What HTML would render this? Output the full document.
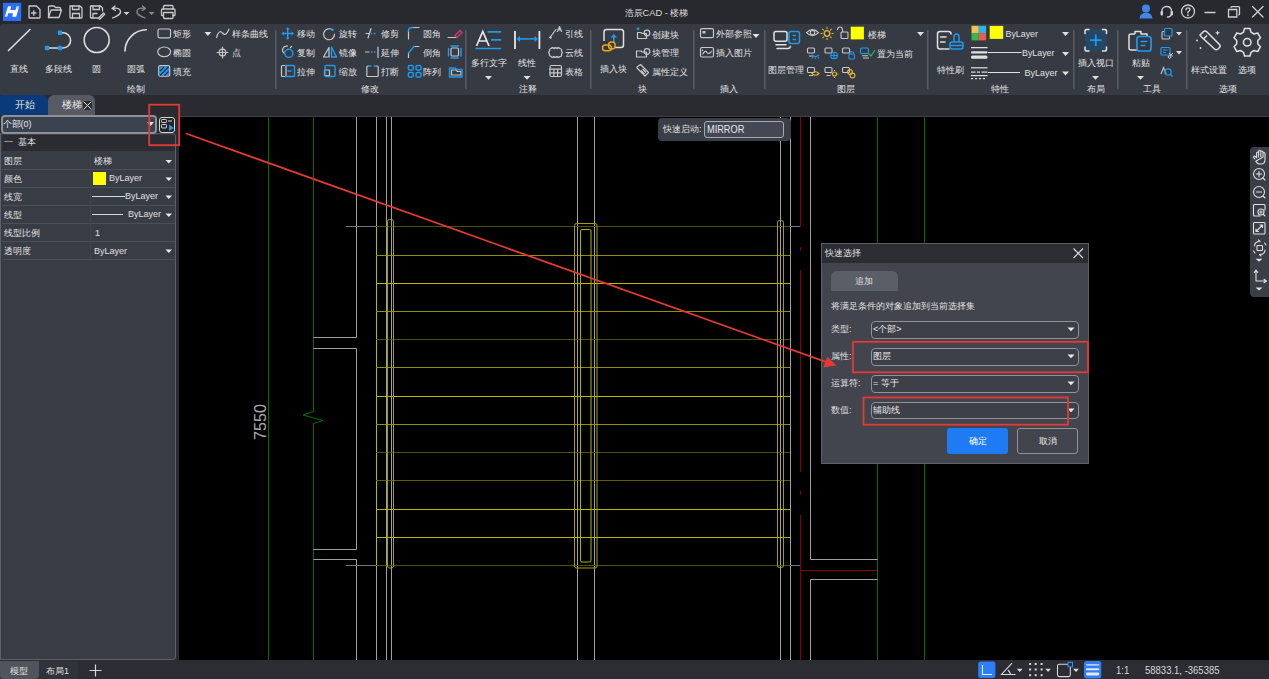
<!DOCTYPE html>
<html><head><meta charset="utf-8">
<style>
*{box-sizing:border-box;margin:0;padding:0}
html,body{width:1269px;height:679px;overflow:hidden;background:#2a2b30}
body{position:relative;font-family:"Liberation Sans",sans-serif;color:#d8d8d8;font-size:11px}
.a{position:absolute}
.t{position:absolute;white-space:nowrap;line-height:1}
#title{left:0;top:0;width:1269px;height:24px;background:#28292e}
#ribbon{left:0;top:24px;width:1269px;height:71px;background:#363a43;border-radius:4px 0 0 0}
#canvas{left:0;top:0}
#panel{left:0;top:133px;width:176px;height:527px;background:#383c45;border:1.5px solid #5d6169;border-top-color:#50535a;border-radius:0 4px 4px 0}
#status{left:0;top:660px;width:1269px;height:19px;background:#2b2d32}
</style></head>
<body>
<div id="title" class="a"></div>
<div id="ribbon" class="a"></div>

<svg class="a" style="left:0;top:0" width="1269" height="96">
<!-- logo -->
<rect x="2.9" y="2.8" width="18.3" height="18.2" fill="#2a6ff5"/>
<defs><linearGradient id="lg" x1="0" y1="1" x2="1" y2="0"><stop offset="0" stop-color="#b8e4fb"/><stop offset="0.35" stop-color="#ffffff"/><stop offset="0.7" stop-color="#ffffff"/><stop offset="1" stop-color="#9fd8f7"/></linearGradient></defs>
<path d="M8,6.6 Q8.3,6.2 8.8,6.2 H11.2 L10.3,10 H15.6 L16.4,6.6 Q16.6,6.3 17,6.3 H19.2 L16.3,16.4 Q16.1,16.8 15.6,16.8 H12.2 L13,13.2 H8.2 L7.5,16.4 Q7.3,16.8 6.8,16.8 H4.6 Z" fill="url(#lg)"/>
<g fill="none" stroke="#c9c9c9" stroke-width="1.3" stroke-linejoin="round" stroke-linecap="round">
<!-- new -->
<path d="M29,6 H36.5 L40,9.5 V17.5 Q40,18 39.5,18 H29.5 Q29,18 29,17.5 Z"/>
<path d="M31.5,13 H36 M33.8,10.7 V15.3"/>
<!-- open -->
<path d="M48.5,17.5 V7 Q48.5,6 49.5,6 H54 L55.5,7.5 H59.5 Q60.5,7.5 60.5,8.5 V9.5"/>
<path d="M48.5,17.5 L51,10 H61.5 L59,17.5 Z"/>
<!-- save -->
<path d="M70,6 H80 L82,8 V17.5 Q82,18 81.5,18 H70.5 Q70,18 70,17.5 Z"/>
<path d="M72.5,6 V9.5 H79 V6 M72.5,18 V13.5 H79.5 V18"/>
<!-- save as -->
<path d="M90.5,6 H100.5 L102.5,8 V11 M99,18 H91 Q90.5,18 90.5,17.5 V6"/>
<path d="M93,6 V9.5 H99.5 V6 M93,18 V13.5 H97"/>
<path d="M98.5,18 L103.5,13 L104.7,14.2 L99.7,19.2 Z"/>
<!-- undo -->
<path d="M112,8.5 L115,6 M112,8.5 L115.5,10.5 M112,8.5 Q121,7 120.5,12.5 Q120,15 112.5,18"/>
<!-- print -->
<path d="M163.5,9 V6.5 Q163.5,5.5 164.5,5.5 H172 Q173,5.5 173,6.5 V9"/>
<path d="M163.5,15.5 H162 Q161.5,15.5 161.5,15 V10 Q161.5,9 162.5,9 H174 Q175,9 175,10 V15 Q175,15.5 174.5,15.5 H173"/>
<path d="M163.5,12.5 H173 V17.5 Q173,18.5 172,18.5 H164.5 Q163.5,18.5 163.5,17.5 Z"/>
</g>
<path d="M123.5,12 L129.5,12 L126.5,15 Z" fill="#d0d0d0"/>
<g fill="none" stroke="#8a8c90" stroke-width="1.3" stroke-linecap="round">
<path d="M145.5,8.5 L142.5,6 M145.5,8.5 L142,10.5 M145.5,8.5 Q136.5,7 137,12.5 Q137.5,15 145,18"/>
</g>
<path d="M148.5,12 L154.5,12 L151.5,15 Z" fill="#8a8c90"/>
<!-- title -->
<text x="656.5" y="15.6" text-anchor="middle" fill="#dcdcdc" font-size="9.3" font-family="Liberation Sans,sans-serif">浩辰CAD - 楼梯</text>
<!-- right icons -->
<circle cx="1146" cy="8.6" r="4" fill="#3f86e6"/>
<path d="M1139.5,18.5 Q1140,12.8 1146,12.8 Q1152,12.8 1152.5,18.5 Z" fill="#3f86e6"/>
<g fill="none" stroke="#cfcfcf" stroke-width="1.3" stroke-linecap="round">
<path d="M1161.8,13 V11.8 Q1161.8,6.5 1166.7,6.5 Q1171.6,6.5 1171.6,11.8 V13"/>
<path d="M1171,15 Q1170.5,17 1167.5,17"/>
<circle cx="1188" cy="11.5" r="6.5"/>
<path d="M1186,9.8 Q1186,7.8 1188,7.8 Q1190,7.8 1190,9.6 Q1190,11 1188,11.8 V13"/>
<path d="M1205,12.5 H1215"/>
<path d="M1228.5,9.5 H1236.8 V17 H1228.5 Z M1231,7.5 Q1231,6.6 1232,6.6 H1238.5 Q1239.5,6.6 1239.5,7.5 V14 Q1239.5,14.8 1238.6,14.8"/>
<path d="M1252.5,6.5 L1263,17 M1263,6.5 L1252.5,17"/>
</g>
<rect x="1160.5" y="11" width="2.5" height="4.5" rx="1" fill="#cfcfcf"/>
<rect x="1170.5" y="11" width="2.5" height="4.5" rx="1" fill="#cfcfcf"/>
<circle cx="1188" cy="15.2" r="0.9" fill="#cfcfcf"/>
</svg>



<svg class="a" style="left:0;top:0" width="1269" height="96" font-family="Liberation Sans,sans-serif" font-size="9" fill="#e2e2e2">
<!-- separators -->
<g fill="#585c64">
<rect x="275" y="30" width="1.5" height="59"/>
<rect x="465" y="30" width="1.5" height="59"/>
<rect x="590" y="30" width="1.5" height="59"/>
<rect x="693" y="30" width="1.5" height="59"/>
<rect x="764" y="30" width="1.5" height="59"/>
<rect x="927" y="30" width="1.5" height="59"/>
<rect x="1073" y="30" width="1.5" height="59"/>
<rect x="1117" y="30" width="1.5" height="59"/>
<rect x="1186" y="30" width="1.5" height="59"/>
</g>
<!-- group labels -->
<g text-anchor="middle">
<text x="135.5" y="92">绘制</text>
<text x="370" y="92">修改</text>
<text x="528" y="92">注释</text>
<text x="642.5" y="92">块</text>
<text x="728.5" y="92">插入</text>
<text x="846" y="92">图层</text>
<text x="1000" y="92">特性</text>
<text x="1095.5" y="92">布局</text>
<text x="1151.5" y="92">工具</text>
<text x="1228" y="92">选项</text>
<!-- big labels -->
<text x="19" y="72.3">直线</text>
<text x="58.5" y="72.3">多段线</text>
<text x="96.5" y="72.3">圆</text>
<text x="135.5" y="72.3">圆弧</text>
<text x="488.5" y="66.3">多行文字</text>
<text x="527" y="66.3">线性</text>
<text x="613" y="72.3">插入块</text>
<text x="786" y="73">图层管理</text>
<text x="950" y="73">特性刷</text>
<text x="1095.5" y="66.3">插入视口</text>
<text x="1140.5" y="66.3">粘贴</text>
<text x="1209" y="73">样式设置</text>
<text x="1247" y="73">选项</text>
</g>
<!-- small labels -->
<g>
<text x="173" y="37">矩形</text>
<text x="173" y="56">椭圆</text>
<text x="173" y="75">填充</text>
<text x="231.5" y="37">样条曲线</text>
<text x="232" y="56">点</text>
<text x="297" y="37">移动</text>
<text x="297" y="56">复制</text>
<text x="297" y="75">拉伸</text>
<text x="339" y="37">旋转</text>
<text x="339" y="56">镜像</text>
<text x="339" y="75">缩放</text>
<text x="381" y="37">修剪</text>
<text x="381" y="56">延伸</text>
<text x="381" y="75">打断</text>
<text x="423" y="37">圆角</text>
<text x="423" y="56">倒角</text>
<text x="423" y="75">阵列</text>
<text x="565" y="37">引线</text>
<text x="565" y="56">云线</text>
<text x="565" y="75">表格</text>
<text x="651.5" y="37.5">创建块</text>
<text x="651.5" y="56">块管理</text>
<text x="651.5" y="75">属性定义</text>
<text x="716" y="37">外部参照</text>
<text x="716" y="56">插入图片</text>
<text x="868" y="37.5">楼梯</text>
<text x="877" y="56.5">置为当前</text>
<text x="1005.5" y="36.8" font-size="9.5" textLength="32.5" lengthAdjust="spacingAndGlyphs">ByLayer</text>
<text x="1022" y="56.2" font-size="9.5" textLength="32.5" lengthAdjust="spacingAndGlyphs">ByLayer</text>
<text x="1024.5" y="76" font-size="9.5" textLength="33" lengthAdjust="spacingAndGlyphs">ByLayer</text>
</g>
<!-- triangles -->
<g fill="#e0e0e0">
<path d="M204.5,32 h6.8 l-3.4,4 z"/>
<path d="M485,76 h7 l-3.5,3.8 z"/>
<path d="M523.5,76 h7 l-3.5,3.8 z"/>
<path d="M752.5,34 h7 l-3.5,4 z"/>
<path d="M917,32 h7 l-3.5,4 z"/>
<path d="M1062,32 h7 l-3.5,4 z"/>
<path d="M1062,52 h7 l-3.5,4 z"/>
<path d="M1062,71.5 h7 l-3.5,4 z"/>
<path d="M1092,76 h7 l-3.5,3.8 z"/>
<path d="M1137,76 h7 l-3.5,3.8 z"/>
<path d="M1176,32 h6 l-3,3.5 z"/>
<path d="M1176,51 h6 l-3,3.5 z"/>
</g>
<g fill="none" stroke="#dcdcdc" stroke-width="1.6" stroke-linecap="round" stroke-linejoin="round">
<!-- line -->
<path d="M8.5,50.5 L30,29.5"/>
<!-- polyline arc -->
<path d="M47,48 H63 A7.6,7.6 0 0 0 63,32.8 H60"/>
<!-- circle -->
<circle cx="96.7" cy="40" r="12.5"/>
<!-- arc -->
<path d="M125,51 A21.5,21.5 0 0 1 146.3,29.8"/>
</g>
<g fill="#1e9bf0">
<rect x="44.8" y="45.8" width="4.4" height="4.4" rx="1"/>
<rect x="57.8" y="45.8" width="4.4" height="4.4" rx="1"/>
<rect x="57.8" y="30.6" width="4.4" height="4.4" rx="1"/>
</g>
<g fill="none" stroke="#c8c8c8" stroke-width="1.2" stroke-linejoin="round" stroke-linecap="round">
<!-- rect -->
<rect x="158" y="29" width="12.5" height="8.8" rx="1.5"/>
<!-- ellipse -->
<ellipse cx="164.2" cy="51.8" rx="6.5" ry="4.8"/>
<!-- hatch frame -->
<rect x="158.7" y="65.6" width="11" height="10.6" rx="1.5"/>
<!-- spline -->
<path d="M216.5,37.5 Q219,29 222.5,33 Q226,37 229,29"/>
<!-- point -->
<circle cx="222.5" cy="52.5" r="3.3"/>
<path d="M222.5,47 V58 M217,52.5 H228"/>
</g>
<rect x="159.5" y="66.5" width="9.4" height="9" fill="#1e9bf0"/>
<path d="M160,71 L164,67 M160,75.5 L168.5,67 M164.5,75.5 L168.5,71.5" stroke="#1b2a40" stroke-width="1.2"/>

<!-- modify icons -->
<g fill="none" stroke="#c8c8c8" stroke-width="1.2" stroke-linecap="round" stroke-linejoin="round">
<!-- copy -->
<path d="M284.5,53.5 A4,4 0 0 1 287.5,46.2 M290.5,47.5 L291.5,46.5"/>
<!-- stretch -->
<path d="M286,65.5 H282.5 Q281.5,65.5 281.5,66.5 V75.5 Q281.5,76.5 282.5,76.5 H286 V65.5"/>
<!-- rotate -->
<path d="M332.5,30 A5.5,5.5 0 1 0 334.5,34"/>
<!-- mirror left -->
<path d="M323.5,57 L329,47.5 V57 Z"/>
<!-- scale small -->
<rect x="324.5" y="70" width="5" height="5.5"/>
<!-- trim -->
<path d="M366,33.5 H369 M368,38 L371,28.5"/>
<!-- extend -->
<path d="M365.5,52 H369 M378,47 V57.5"/>
<!-- break -->
<path d="M368.5,66 H367.8 Q366.8,66 366.8,67 V75.5 Q366.8,76.5 367.8,76.5 H377.2 Q378.2,76.5 378.2,75.5 V67 Q378.2,66 377.2,66 H376.5"/>
<!-- fillet -->
<path d="M408.5,39 V31" />
<path d="M413,27.5 H419"/>
<!-- chamfer -->
<path d="M408.5,57.5 V53"/>
<path d="M414,46.5 H419"/>
<!-- erase line -->
<path d="M448,37.5 H456"/>
<!-- offset rect -->
<rect x="451" y="48" width="7.5" height="8" rx="1"/>
<!-- folder -->
<path d="M451.5,70 H456 L457.5,71.5 H461 V75 H451.5 Z"/>
</g>
<g fill="none" stroke="#1e9bf0" stroke-width="1.4" stroke-linecap="round" stroke-linejoin="round">
<!-- move -->
<path d="M287.7,28.5 V38.5 M282.7,33.5 H292.7"/>
<circle cx="288.8" cy="53.3" r="4.1"/>
<path d="M285.5,65.5 H293.5 Q294.5,65.5 294.5,66.5 V75.5 Q294.5,76.5 293.5,76.5 H285.5 M288,71 H291"/>
<path d="M331.5,47 L336.5,57 H331.5 Z"/>
<rect x="325" y="65.5" width="10" height="11" rx="1.2"/>
<path d="M371,33.5 H372.5 M374,33.5 H375.5" stroke-linecap="butt"/>
<path d="M371,52 H372.5 M374,52 H375.5" stroke-linecap="butt"/>
<path d="M369.3,66 H370.8 M374.2,66 H375.7"/>
<path d="M408.5,31 Q408.5,27.5 412.5,27.5"/>
<path d="M408.5,53 L414,46.5"/>
<path d="M448.5,48.5 V56 M461,48.5 V56 M451,46 H458.5 M451,58 H458.5"/>
<path d="M449.5,68 H455 L456.5,69.5 H462 V77 H449.5 Z"/>
</g>
<g fill="#1e9bf0">
<path d="M287.7,27.3 l-2,2.3 h4 z M287.7,39.7 l-2,-2.3 h4 z M281.5,33.5 l2.3,-2 v4 z M293.9,33.5 l-2.3,-2 v4 z"/>
<circle cx="332.5" cy="29.7" r="1.3"/>
</g>
<g fill="none" stroke="#1e9bf0" stroke-width="1.4">
<rect x="408.3" y="65.5" width="5" height="4.5" rx="1.3"/>
<rect x="416" y="65.5" width="5" height="4.5" rx="1.3"/>
<rect x="408.3" y="72.5" width="5" height="4.5" rx="1.3"/>
<rect x="416" y="72.5" width="5" height="4.5" rx="1.3"/>
</g>
<path d="M455,35.5 L460,30.5 L462,32.5 L457,37.5 Z" fill="none" stroke="#d23a78" stroke-width="1.3"/>
</svg>


<svg class="a" style="left:0;top:0" width="1269" height="96">
<!-- mtext -->
<path d="M476.5,46 L482.8,31.5 L489,46 M478.7,41 H487" fill="none" stroke="#e6e6e6" stroke-width="1.7"/>
<g stroke="#1e9bf0" stroke-width="1.7">
<path d="M487.5,31.8 H501.2 M491,39.8 H501.2 M475.5,48.5 H501.2"/>
</g>
<!-- linear dim -->
<path d="M515,31 V49 M539.4,31 V49" stroke="#e6e6e6" stroke-width="1.8"/>
<path d="M517.5,38.9 H537" stroke="#1e9bf0" stroke-width="1.6"/>
<path d="M516.5,38.9 l3.5,-3.2 v6.4 z M538,38.9 l-3.5,-3.2 v6.4 z" fill="#1e9bf0"/>
<g fill="none" stroke="#c8c8c8" stroke-width="1.2" stroke-linecap="round" stroke-linejoin="round">
<!-- leader -->
<path d="M550,37.5 L556,29.5"/>
<path d="M557.5,31.5 L559.5,26.5 L561.5,31.5 M558.3,29.8 H560.7"/>
<!-- cloud -->
<path d="M551,48.5 Q552.5,47 554,48.5 Q555.5,47 557,48.5 Q558.5,47 560,48.5 Q562,49 561.5,51 Q563,52.5 561.5,54 Q562,56.5 560,56.5 Q558.5,58 557,56.5 Q555.5,58 554,56.5 Q552.5,58 551,56.5 Q549,56 549.5,54 Q548,52.5 549.5,51 Q549,49 551,48.5 Z"/>
<!-- table -->
<rect x="550" y="65.5" width="11.5" height="11" rx="1.5"/>
<path d="M550,69.2 H561.5 M550,72.8 H561.5 M553.8,69.2 V76.5 M557.6,69.2 V76.5"/>
</g>
<circle cx="550.5" cy="37.5" r="1.2" fill="#c8c8c8"/>
<!-- insert block -->
<rect x="604" y="29.5" width="19.5" height="18" rx="2.5" fill="none" stroke="#e0e0e0" stroke-width="1.5"/>
<rect x="600" y="41" width="15" height="11" fill="#32363e"/>
<path d="M613.8,42.5 V36" stroke="#1e9bf0" stroke-width="1.6"/>
<path d="M613.8,34 l-3.2,3.5 h6.4 z" fill="#1e9bf0"/>
<g fill="none" stroke="#e8a817" stroke-width="1.5">
<rect x="602.5" y="45" width="9" height="5.8" rx="2.8"/>
<rect x="608.5" y="42" width="6.5" height="7" rx="3"/>
</g>
<g fill="none" stroke="#c8c8c8" stroke-width="1.2" stroke-linejoin="round">
<!-- create block -->
<path d="M637.5,32.5 H641 L642,33.5 H646.5 V38.5 H637.5 Z"/>
<circle cx="647" cy="33" r="2.8"/>
<!-- block manage -->
<path d="M636.5,51 H641 L642,52 H646.5 V57 H636.5 Z"/>
<circle cx="647" cy="51.5" r="2.8"/>
<!-- attdef tag -->
<path d="M637,67 L640.5,64.5 L648.5,72.5 L645,76 L637,68 Z"/>
<path d="M641,70.5 L644.5,74 M642.5,69 L646,72.5"/>
</g>
<circle cx="638" cy="28.8" r="1.4" fill="#1e9bf0"/>
<!-- xref -->
<g fill="none" stroke="#c8c8c8" stroke-width="1.2">
<rect x="700.5" y="28.7" width="13" height="9" rx="1.5"/>
<rect x="700.5" y="47.5" width="13" height="9.5" rx="1.5"/>
<path d="M702.5,54.5 Q705,49.5 707,52.5 Q709,55 712,51"/>
<path d="M702.5,49.5 V51"/>
</g>
<rect x="702.5" y="31" width="3" height="2.5" fill="#c8c8c8"/>
<!-- layer manager -->
<g fill="none" stroke="#e0e0e0" stroke-width="1.5" stroke-linecap="round">
<rect x="774" y="31.5" width="13" height="9.7" rx="2"/>
<path d="M776,44.8 H786 M777,48.5 H788 Q790,48.5 790.5,46.5"/>
</g>
<rect x="789" y="31.5" width="10.5" height="12" rx="2" fill="none" stroke="#1e9bf0" stroke-width="1.5"/>
<path d="M792.5,35.5 H796 M792.5,39.5 H796" stroke="#1e9bf0" stroke-width="1.5"/>
<!-- eye -->
<g fill="none" stroke="#c8c8c8" stroke-width="1.1">
<path d="M806.5,32.7 Q812.5,26.5 818.5,32.7 Q812.5,38.9 806.5,32.7 Z"/>
<circle cx="812.5" cy="32.7" r="2.2"/>
</g>
<!-- sun -->
<circle cx="827" cy="33.5" r="2.8" fill="none" stroke="#e8b830" stroke-width="1.3"/>
<path d="M827,27 V29 M827,38 V40 M820.5,33.5 H822.5 M831.5,33.5 H833.5 M822.4,28.9 L823.8,30.3 M830.2,36.7 L831.6,38.1 M831.6,28.9 L830.2,30.3 M823.8,36.7 L822.4,38.1" stroke="#e8b830" stroke-width="1.1"/>
<!-- lock -->
<g fill="none" stroke="#c8c8c8" stroke-width="1.1">
<rect x="841" y="32" width="7" height="6.5" rx="1"/>
<path d="M837.5,30 Q837.5,27 840,27 Q842.5,27 842.5,30 V32"/>
</g>
<rect x="850.7" y="26.7" width="13.2" height="12.7" fill="#ffff00"/>
<!-- layer row 2/3 icons -->
<g fill="none" stroke="#c8c8c8" stroke-width="1.1">
<rect x="807.5" y="48" width="7" height="5" rx="1"/>
<rect x="825" y="48" width="7" height="5" rx="1"/>
<rect x="842.5" y="48" width="7" height="5" rx="1"/>
<rect x="807.5" y="67.5" width="7" height="5" rx="1"/>
<rect x="825" y="67.5" width="7" height="5" rx="1"/>
<rect x="842.5" y="67.5" width="7" height="5" rx="1"/>
<path d="M809,56 H813 M826.5,75.5 H830.5 M809,75.5 H813"/>
</g>
<g fill="none" stroke="#1e9bf0" stroke-width="1.1">
<path d="M812,55 Q815.5,58 819,55 M813,57 L812,58.5 M815.5,57.5 V59 M818,57 L819,58.5"/>
<circle cx="834" cy="55.5" r="3.3"/>
<path d="M831,55.5 H837 M834,52.5 V58.5"/>
<rect x="849" y="54" width="5.5" height="5" rx="1"/>
<path d="M850,54 V52.5 Q851.7,50.5 853.5,52.5 V54"/>
<rect x="860.5" y="48" width="8" height="5.5" rx="1"/>
</g>
<path d="M862,55.8 H868 M863,58 H869" stroke="#c8c8c8" stroke-width="1.1"/>
<path d="M868.5,53.5 L871,56 L875,50" fill="none" stroke="#2bb24c" stroke-width="1.3"/>
<g fill="none" stroke="#e8b830" stroke-width="1.1">
<path d="M812,73.5 Q815.5,70 819,73.5 Q815.5,77 812,73.5 Z"/>
<circle cx="834.5" cy="74" r="2"/>
<path d="M834.5,70 V71 M834.5,77 V78 M830.5,74 H831.5 M837.5,74 H838.5"/>
<circle cx="850" cy="72" r="2.4"/>
<circle cx="852.5" cy="75.5" r="2.4"/>
</g>
<!-- match prop -->
<g fill="none" stroke="#e0e0e0" stroke-width="1.5" stroke-linecap="round">
<path d="M951,34 Q951,31.5 948.5,31.5 H940 Q937.5,31.5 937.5,34 V46.5 Q937.5,49 940,49 H949"/>
<path d="M940.5,37 H946 M940.5,42 H945"/>
</g>
<g fill="none" stroke="#1e9bf0" stroke-width="1.5" stroke-linejoin="round">
<path d="M954,42 V37 Q954,34 956.5,34 Q959,34 959,37 V42"/>
<rect x="950" y="42" width="13" height="7" rx="2"/>
<path d="M950,45.5 H963"/>
</g>
<!-- color wheel -->
<rect x="971.5" y="25.8" width="7.3" height="7.3" fill="#f2c14e"/>
<rect x="978.8" y="25.8" width="7.3" height="7.3" fill="#2ab4f0"/>
<rect x="971.5" y="33.1" width="7.3" height="7.3" fill="#3cb64e"/>
<rect x="978.8" y="33.1" width="7.3" height="7.3" fill="#e8604c"/>
<rect x="989.7" y="25.9" width="13.5" height="13" fill="#ffff00"/>
<!-- lineweight icon -->
<g fill="#e0e0e0">
<rect x="971" y="47" width="16.5" height="1.3"/>
<rect x="971" y="51.2" width="16.5" height="2.2" rx="1"/>
<rect x="971" y="55.5" width="16.5" height="3.2" rx="1.5"/>
<rect x="988" y="52" width="33.5" height="1"/>
<rect x="971" y="67.2" width="16.5" height="1.2"/>
<rect x="971" y="71.5" width="4.5" height="1.2"/><rect x="977" y="71.5" width="3" height="1.2"/><rect x="981.5" y="71.5" width="6" height="1.2"/>
<rect x="971" y="75" width="16.5" height="1.2"/>
<rect x="971" y="78" width="2" height="1.2"/><rect x="975" y="78" width="2" height="1.2"/><rect x="979" y="78" width="2" height="1.2"/><rect x="983" y="78" width="2" height="1.2"/>
<rect x="988" y="72" width="32" height="1"/>
</g>
<!-- insert viewport -->
<rect x="1085" y="29.5" width="21.5" height="21" fill="#254766"/>
<g fill="none" stroke="#e6e6e6" stroke-width="1.5" stroke-linecap="round">
<path d="M1085,33.5 V31 Q1085,29.5 1086.5,29.5 H1089 M1102.5,29.5 H1105 Q1106.5,29.5 1106.5,31 V33.5 M1106.5,47 V49.5 Q1106.5,51 1105,51 H1102.5 M1089,51 H1086.5 Q1085,51 1085,49.5 V47"/>
</g>
<path d="M1095.8,34.5 V46 M1090,40.2 H1101.5" stroke="#1e9bf0" stroke-width="1.8"/>
<!-- paste -->
<g fill="none" stroke="#e0e0e0" stroke-width="1.5" stroke-linejoin="round">
<path d="M1135,34 H1131 Q1129,34 1129,36 V48 Q1129,50 1131,50 H1137"/>
<path d="M1135,34 V31.5 H1141 V34 H1147 V36"/>
</g>
<rect x="1137" y="36.5" width="14" height="14.5" rx="2.5" fill="#32363e" stroke="#1e9bf0" stroke-width="1.7"/>
<path d="M1140.5,41.5 H1147.5 M1140.5,45.5 H1145.5" stroke="#1e9bf0" stroke-width="1.5"/>
<!-- small tool icons -->
<rect x="1162" y="31.5" width="7.5" height="7.5" rx="1" fill="none" stroke="#c8c8c8" stroke-width="1.1"/>
<rect x="1164.5" y="28.5" width="7.5" height="7.5" rx="1" fill="#32363e" stroke="#1e9bf0" stroke-width="1.2"/>
<rect x="1161" y="47.5" width="9" height="7.5" rx="1" fill="none" stroke="#1e9bf0" stroke-width="1.2"/>
<path d="M1163,50 H1167.5 M1163,52.5 H1166" stroke="#1e9bf0" stroke-width="1"/>
<g fill="none" stroke="#c8c8c8" stroke-width="1"><circle cx="1169.5" cy="57" r="1.3"/><path d="M1169,53 L1173,56.5 M1173,53 L1170,56"/></g>
<path d="M1161,74 L1163.5,67.5 L1166,74" fill="none" stroke="#c8c8c8" stroke-width="1.1"/>
<circle cx="1168" cy="72" r="3.2" fill="none" stroke="#1e9bf0" stroke-width="1.2"/>
<path d="M1170.2,74.2 L1172.5,76.5" stroke="#1e9bf0" stroke-width="1.3"/>
<!-- style settings -->
<g fill="none" stroke="#e0e0e0" stroke-width="1.5" stroke-linejoin="round">
<path d="M1200,35 L1203,32 Q1205,30 1207,32 L1219.5,44.5 Q1221,46.5 1219,48 L1218,49 Q1216,50.5 1214.5,49 L1201,36.5 Z"/>
<path d="M1203.5,39 L1207,35.5"/>
</g>
<path d="M1217.5,30.5 l0.8,1.8 1.8,0.5 -1.8,0.6 -0.8,1.8 -0.8,-1.8 -1.8,-0.6 1.8,-0.5 z" fill="#e0e0e0"/>
<circle cx="1197" cy="40.5" r="0.9" fill="#e0e0e0"/>
<circle cx="1200.5" cy="48" r="0.9" fill="#e0e0e0"/>
<!-- gear -->
<g fill="none" stroke="#e0e0e0" stroke-width="1.5" stroke-linejoin="round">
<path d="M1244.5,28.5 H1250 L1251,32.2 L1254,34 L1257.7,33 L1260.5,37.8 L1257.8,40.5 V44 L1260.5,46.7 L1257.7,51.5 L1254,50.5 L1251,52.3 L1250,56 H1244.5 L1243.5,52.3 L1240.5,50.5 L1236.8,51.5 L1234,46.7 L1236.7,44 V40.5 L1234,37.8 L1236.8,33 L1240.5,34 L1243.5,32.2 Z"/>
<circle cx="1247.2" cy="42.2" r="3.8"/>
</g>
</svg>

<svg id="canvas" class="a" width="1269" height="679">
<rect x="179" y="117" width="1090" height="543" fill="#000"/>
<line x1="179" y1="116.5" x2="1269" y2="116.5" stroke="#3c3f46"/>
<!-- green -->
<g stroke="#007000" stroke-width="1" fill="none">
<line x1="268.5" y1="117" x2="268.5" y2="660"/>
<polyline points="313.5,117 313.5,411.5 303,415 323,420.5 313.5,423.5 313.5,660"/>
<line x1="877.5" y1="117" x2="877.5" y2="660"/>
<line x1="924.5" y1="117" x2="924.5" y2="660"/>
</g>
<!-- grey -->
<g stroke="#a0a0a0" stroke-width="1" fill="none">
<polyline points="356.5,117 356.5,337.5 313.5,337.5"/>
<polyline points="313.5,348.5 356.5,348.5 356.5,549.5 313.5,549.5"/>
<polyline points="313.5,559.5 356.5,559.5 356.5,660"/>
<line x1="376.5" y1="117" x2="376.5" y2="226"/>
<line x1="376.5" y1="565" x2="376.5" y2="660"/>
<line x1="386.5" y1="117" x2="386.5" y2="660"/>
<line x1="391.5" y1="117" x2="391.5" y2="660"/>
<line x1="346" y1="226.5" x2="376" y2="226.5" stroke="#777"/>
<line x1="346" y1="565.5" x2="376" y2="565.5" stroke="#777"/>
<line x1="577.5" y1="117" x2="577.5" y2="660"/>
<line x1="594.5" y1="117" x2="594.5" y2="660"/>
<line x1="780.5" y1="117" x2="780.5" y2="660"/>
<line x1="790.5" y1="117" x2="790.5" y2="660"/>
<polyline points="810.5,117 810.5,559.5 877.5,559.5"/>
<polyline points="877.5,579.5 810.5,579.5 810.5,660"/>
<line x1="790" y1="226.5" x2="800" y2="226.5" stroke="#777"/>
<line x1="790" y1="565.5" x2="800" y2="565.5" stroke="#777"/>
</g>
<!-- red -->
<g stroke="#880000" stroke-width="1" fill="none">
<line x1="800.5" y1="117" x2="800.5" y2="227"/>
<line x1="800.5" y1="247" x2="800.5" y2="251"/>
<line x1="800.5" y1="270" x2="800.5" y2="472"/>
<line x1="800.5" y1="491" x2="800.5" y2="495"/>
<line x1="800.5" y1="515" x2="800.5" y2="660"/>
<line x1="800" y1="570.5" x2="877" y2="570.5"/>
</g>
<!-- yellow -->
<g stroke="#b8b800" stroke-width="1" fill="none">
<line x1="376.5" y1="226" x2="376.5" y2="565"/>
<line x1="376" y1="226.5" x2="790" y2="226.5" stroke="#505000"/>
<line x1="376" y1="255.5" x2="790" y2="255.5" stroke="#909000"/>
<line x1="376" y1="283.5" x2="790" y2="283.5" stroke="#b8b800"/>
<line x1="376" y1="311.5" x2="790" y2="311.5" stroke="#909000"/>
<line x1="376" y1="339.5" x2="790" y2="339.5" stroke="#505000"/>
<line x1="376" y1="367.5" x2="790" y2="367.5" stroke="#909000"/>
<line x1="376" y1="396.5" x2="790" y2="396.5" stroke="#b8b800"/>
<line x1="376" y1="424.5" x2="790" y2="424.5" stroke="#909000"/>
<line x1="376" y1="452.5" x2="790" y2="452.5" stroke="#505000"/>
<line x1="376" y1="480.5" x2="790" y2="480.5" stroke="#606000"/>
<line x1="376" y1="509.5" x2="790" y2="509.5" stroke="#b8b800"/>
<line x1="376" y1="537.5" x2="790" y2="537.5" stroke="#b8b800"/>
<line x1="376" y1="565.5" x2="790" y2="565.5" stroke="#505000"/>
<rect x="387.5" y="219.5" width="6" height="348.5" rx="2" stroke="#a0a000"/>
<rect x="574.5" y="223.5" width="22.5" height="344.5" rx="2" stroke="#a0a000"/>
<rect x="580.5" y="229.5" width="10.5" height="332.5" rx="1.5" stroke="#b0b000"/>
<rect x="777.5" y="220.5" width="6" height="347" rx="2" stroke="#a0a000"/>
</g>
<text x="0" y="0" transform="translate(265.5,440) rotate(-90)" fill="#a8a8a8" font-size="15.8" font-family="Liberation Sans" textLength="36" lengthAdjust="spacingAndGlyphs">7550</text>
</svg>

<div id="panel" class="a"></div>

<!-- tabs -->
<div class="a" style="left:0;top:95px;width:47.5px;height:20px;background:#0b3a7a;border-radius:3px 6px 0 0"></div>
<div class="t" style="left:15px;top:100px;font-size:9.5px;color:#e4e4e4">开始</div>
<div class="a" style="left:48px;top:95px;width:47px;height:20px;background:#575a62;border-radius:6px 6px 0 0"></div>
<div class="t" style="left:62px;top:100px;font-size:9.5px;color:#e4e4e4">楼梯</div>
<div class="a" style="left:82.8px;top:100.7px;width:9.2px;height:9.2px;background:#2b2d31"></div>
<svg class="a" style="left:82px;top:100px" width="11" height="11"><path d="M1.5,1.5 L9.5,9.5 M9.5,1.5 L1.5,9.5" stroke="#e0e0e0" stroke-width="1"/></svg>

<!-- combo -->
<div class="a" style="left:0.5px;top:115px;width:156.5px;height:18.5px;background:#3a4250;border:2px solid #8d9096;border-radius:4px"></div>
<div class="t" style="left:2.5px;top:119.5px;font-size:9px;color:#e8e8e8">个部(0)</div>
<svg class="a" style="left:146px;top:121px" width="10" height="8"><path d="M1,1 h7 l-3.5,4 z" fill="#e8e8e8"/></svg>
<div class="a" style="left:158.5px;top:116.5px;width:16px;height:16px;border:1.5px solid #d8d8d8;border-radius:3px;background:#222428"></div>
<svg class="a" style="left:158px;top:116px" width="18" height="18">
<rect x="3.5" y="3.5" width="5" height="3" rx="0.8" fill="none" stroke="#d8d8d8" stroke-width="1"/>
<rect x="3.5" y="8.5" width="5" height="3.5" rx="0.8" fill="none" stroke="#d8d8d8" stroke-width="1"/>
<path d="M10,5 H14" stroke="#d8d8d8" stroke-width="1"/>
<path d="M11,8.5 L16,12 L11,15 Z" fill="#1e9bf0"/>
</svg>

<!-- panel rows -->
<div class="a" style="left:1.5px;top:134.5px;width:173px;height:16.5px;background:#2a2c31"></div>
<div class="t" style="left:4px;top:138px;font-size:9px;color:#e0e0e0">一&nbsp; 基本</div>
<div class="a" style="left:1.5px;top:151px;width:173px;height:108px;background:#383c45"></div>
<div class="a" style="left:1.5px;top:168.5px;width:173px;height:1.5px;background:#4b4f58"></div>
<div class="a" style="left:1.5px;top:186.5px;width:173px;height:1.5px;background:#4b4f58"></div>
<div class="a" style="left:1.5px;top:204.5px;width:173px;height:1.5px;background:#4b4f58"></div>
<div class="a" style="left:1.5px;top:222.5px;width:173px;height:1.5px;background:#4b4f58"></div>
<div class="a" style="left:1.5px;top:240.5px;width:173px;height:1.5px;background:#4b4f58"></div>
<div class="a" style="left:1.5px;top:258.5px;width:173px;height:1.5px;background:#4b4f58"></div>
<div class="a" style="left:90px;top:151px;width:1px;height:108px;background:#3f434c"></div>
<div class="t" style="left:3.5px;top:156.5px;font-size:9px;color:#e0e0e0">图层</div>
<div class="t" style="left:3.5px;top:174.5px;font-size:9px;color:#e0e0e0">颜色</div>
<div class="t" style="left:3.5px;top:192.5px;font-size:9px;color:#e0e0e0">线宽</div>
<div class="t" style="left:3.5px;top:210.5px;font-size:9px;color:#e0e0e0">线型</div>
<div class="t" style="left:3.5px;top:228.5px;font-size:9px;color:#e0e0e0">线型比例</div>
<div class="t" style="left:3.5px;top:246.5px;font-size:9px;color:#e0e0e0">透明度</div>
<div class="t" style="left:94px;top:156.5px;font-size:9px;color:#e0e0e0">楼梯</div>
<div class="a" style="left:93.3px;top:171.5px;width:13.2px;height:13.3px;background:#ffff00"></div>
<div class="t" style="left:109px;top:174px;font-size:9px;color:#e0e0e0">ByLayer</div>
<div class="a" style="left:92px;top:196.3px;width:33px;height:1px;background:#d8d8d8"></div>
<div class="t" style="left:125px;top:192px;font-size:9px;color:#e0e0e0">ByLayer</div>
<div class="a" style="left:92px;top:214.3px;width:30.5px;height:1px;background:#d8d8d8"></div>
<div class="t" style="left:128px;top:210px;font-size:9px;color:#e0e0e0">ByLayer</div>
<div class="t" style="left:95px;top:228.5px;font-size:9px;color:#e0e0e0">1</div>
<div class="t" style="left:94px;top:246.5px;font-size:9px;color:#e0e0e0">ByLayer</div>
<svg class="a" style="left:162px;top:155px" width="14" height="100" fill="#e8e8e8">
<path d="M3.5,5 h6.5 l-3.25,3.6 z"/>
<path d="M3.5,22.5 h6.5 l-3.25,3.6 z"/>
<path d="M3.5,40.5 h6.5 l-3.25,3.6 z"/>
<path d="M3.5,58.5 h6.5 l-3.25,3.6 z"/>
<path d="M3.5,94.5 h6.5 l-3.25,3.6 z"/>
</svg>


<!-- quick input -->
<div class="a" style="left:657.5px;top:118px;width:133.5px;height:23px;background:#3a3e47;border-radius:4px"></div>
<div class="t" style="left:663px;top:124.5px;font-size:9px;color:#e0e0e0">快速启动:</div>
<div class="a" style="left:704px;top:120.5px;width:80px;height:17.5px;background:#434854;border:1.5px solid #a8abb0;border-radius:3px"></div>
<div class="t" style="left:706.5px;top:124.5px;font-size:10px;color:#e8e8e8;transform:scaleX(0.92);transform-origin:0 0">MIRROR</div>

<!-- nav bar -->
<div class="a" style="left:1250px;top:147px;width:22px;height:150px;background:#3a3e47;border-radius:4px"></div>
<svg class="a" style="left:1250px;top:147px" width="19" height="150">
<g fill="none" stroke="#e0e0e0" stroke-width="1.1" stroke-linecap="round" stroke-linejoin="round">
<path d="M4.8,12 Q3,10.2 3.8,9.4 Q4.6,8.6 5.8,9.8 L6.6,10.8 V6 Q6.6,5 7.6,5 Q8.6,5 8.6,6 V10 M8.6,9.5 V4.3 Q8.6,3.3 9.7,3.3 Q10.8,3.3 10.8,4.3 V9.5 M10.8,9.5 V5 Q10.8,4 11.9,4 Q13,4 13,5 V10 M13,10 V6.5 Q13,5.5 14,5.5 Q15,5.5 15,6.5 V12.5 Q15,17 11,17 H9.8 Q7.2,17 5.8,14.2 Z"/>
<circle cx="9" cy="27" r="5.5"/><path d="M6.3,27 H11.7 M9,24.3 V29.7 M13,31 L15,33"/>
<circle cx="9" cy="45" r="5.5"/><path d="M6.3,45 H11.7 M13,49 L15,51"/>
<path d="M10,69 H4.5 Q3.5,69 3.5,68 V58.5 Q3.5,57.5 4.5,57.5 H14 Q15,57.5 15,58.5 V63"/><circle cx="11" cy="65" r="3"/><path d="M9.8,65 H12.2 M11,63.8 V66.2 M13.2,67.2 L15,69"/>
<rect x="3.5" y="75.5" width="11.5" height="11.5" rx="1"/><path d="M6,84.5 L12.5,78 M6,84.5 V82 M6,84.5 H8.5 M12.5,78 H10 M12.5,78 V80.5"/>
<rect x="7" y="98.5" width="5.5" height="5" rx="0.8"/><path d="M4.5,99 Q4.5,94.5 10,94.5 L8.5,93 M15,103 Q15,107.5 9.5,107.5 L11,109 M3.5,104 L5,106 M16,98 L14.5,96"/>
<path d="M5.5,111.8 h7 l-3.5,3 z" fill="#e0e0e0" stroke="none"/>
<path d="M6,123 V134 H16.5 M6,123 L4.3,125.5 M6,123 L7.7,125.5 M16.5,134 L14,132.3 M16.5,134 L14,135.7"/>
<path d="M5.5,140.5 h7 l-3.5,3 z" fill="#e0e0e0" stroke="none"/>
</g>
</svg>

<!-- dialog -->
<div class="a" style="left:820.5px;top:243px;width:268.5px;height:221px;background:#42454e;border:1px solid #5c5f66"></div>
<div class="a" style="left:821.5px;top:244px;width:266.5px;height:18.5px;background:#2b2d32"></div>
<div class="t" style="left:824.5px;top:249px;font-size:9px;color:#e0e0e0">快速选择</div>
<svg class="a" style="left:1072px;top:247px" width="13" height="13"><path d="M1.5,1.5 L11,11 M11,1.5 L1.5,11" stroke="#d8d8d8" stroke-width="1.2"/></svg>
<div class="a" style="left:830.5px;top:271px;width:67.5px;height:20px;background:#5a5e67;border-radius:6px 6px 0 0"></div>
<div class="t" style="left:855px;top:277px;font-size:9px;color:#e0e0e0">追加</div>
<div class="t" style="left:830.5px;top:302px;font-size:9px;color:#e0e0e0">将满足条件的对象追加到当前选择集</div>
<div class="t" style="left:831px;top:325px;font-size:9px;color:#e0e0e0">类型:</div>
<div class="t" style="left:831px;top:352px;font-size:9px;color:#e0e0e0">属性:</div>
<div class="t" style="left:831px;top:379px;font-size:9px;color:#e0e0e0">运算符:</div>
<div class="t" style="left:831px;top:406px;font-size:9px;color:#e0e0e0">数值:</div>
<div class="a" style="left:870.5px;top:321px;width:208.5px;height:17.5px;border:1.5px solid #909398;border-radius:4px;background:#3d4048"></div>
<div class="a" style="left:870.5px;top:347.5px;width:208.5px;height:18px;border:1.5px solid #909398;border-radius:4px;background:#3d4048"></div>
<div class="a" style="left:870.5px;top:375px;width:208.5px;height:17.5px;border:1.5px solid #909398;border-radius:4px;background:#3d4048"></div>
<div class="a" style="left:870.5px;top:401.5px;width:208.5px;height:17.5px;border:1.5px solid #909398;border-radius:4px;background:#3d4048"></div>
<div class="t" style="left:873px;top:325px;font-size:9px;color:#e8e8e8">&lt;个部&gt;</div>
<div class="t" style="left:873px;top:352px;font-size:9px;color:#e8e8e8">图层</div>
<div class="t" style="left:873px;top:379px;font-size:9px;color:#e8e8e8">= 等于</div>
<div class="t" style="left:873px;top:406px;font-size:9px;color:#e8e8e8">辅助线</div>
<svg class="a" style="left:1064px;top:320px" width="14" height="100" fill="#e8e8e8">
<path d="M3.5,7.5 h7 l-3.5,3.8 z"/>
<path d="M3.5,34.5 h7 l-3.5,3.8 z"/>
<path d="M3.5,61.5 h7 l-3.5,3.8 z"/>
<path d="M3.5,88.5 h7 l-3.5,3.8 z"/>
</svg>
<div class="a" style="left:946.8px;top:428px;width:61.2px;height:25.7px;background:#1f7bf4;border-radius:3px"></div>
<div class="t" style="left:969px;top:436.5px;font-size:9px;color:#ffffff">确定</div>
<div class="a" style="left:1017.3px;top:428px;width:61.2px;height:25.7px;border:1.5px solid #909398;border-radius:3px"></div>
<div class="t" style="left:1039px;top:436.5px;font-size:9px;color:#e8e8e8">取消</div>

<div id="status" class="a"></div>

<!-- status -->
<div class="a" style="left:0;top:660.5px;width:39px;height:18.5px;background:#50545c;border-radius:0 0 4px 4px"></div>
<div class="t" style="left:10px;top:666.5px;font-size:9px;color:#e0e0e0">模型</div>
<div class="a" style="left:39px;top:660.5px;width:38.5px;height:18.5px;background:#2f333a"></div>
<div class="t" style="left:46px;top:666.5px;font-size:9px;color:#e0e0e0">布局1</div>
<svg class="a" style="left:88px;top:663px" width="15" height="15"><path d="M7.5,1.5 V13.5 M1.5,7.5 H13.5" stroke="#d8d8d8" stroke-width="1.2"/></svg>
<svg class="a" style="left:970px;top:660px" width="299" height="19">
<rect x="8.2" y="1.5" width="17.2" height="16.5" rx="2.5" fill="#2d7ef7"/>
<path d="M12.5,5 V14.5 H22" fill="none" stroke="#e8f0ff" stroke-width="1.1"/>
<g fill="none" stroke="#d8d8d8" stroke-width="1.1">
<path d="M42,3.2 L31.5,14.5 H45.5 M38,10 Q40,12 40.5,14.5"/>
<rect x="87.5" y="4.2" width="12.8" height="12.4" rx="1.8"/>
</g>
<g fill="#d8d8d8">
<path d="M46.7,8.8 h6 l-3,3.2 z"/><path d="M75.3,8.8 h5.6 l-2.8,3.2 z"/><path d="M103,8.8 h6 l-3,3.2 z"/>
<rect x="59.1" y="3" width="2" height="2"/><rect x="64.7" y="3" width="2" height="2"/><rect x="70.6" y="3" width="2" height="2"/>
<rect x="59.1" y="8.5" width="2" height="2"/><rect x="64.7" y="8.5" width="2" height="2"/><rect x="70.6" y="8.5" width="2" height="2"/>
<rect x="59.1" y="14.2" width="2" height="2"/><rect x="64.7" y="14.2" width="2" height="2"/><rect x="70.6" y="14.2" width="2" height="2"/>
</g>
<rect x="98" y="2.3" width="4.5" height="4.5" fill="#2b2d32" stroke="#2d8ef7" stroke-width="1.1"/>
<rect x="114" y="1" width="17.3" height="17.4" rx="2.5" fill="#2d7ef7"/>
<rect x="116" y="4.3" width="13.3" height="1.3" rx="0.6" fill="#e8e8e8"/>
<rect x="116" y="8.2" width="13.3" height="2" rx="1" fill="#e8e8e8"/>
<rect x="116" y="12.6" width="13.3" height="2.8" rx="1.4" fill="#e8e8e8"/>
</svg>
<div class="t" style="left:1116px;top:665px;font-size:10.5px;color:#d8d8d8;transform:scaleX(0.9);transform-origin:0 0">1:1</div>
<div class="t" style="left:1144.5px;top:664.5px;font-size:10.5px;color:#d8d8d8;transform:scaleX(0.905);transform-origin:0 0">58833.1, -365385</div>

<!-- red annotations -->
<svg class="a" style="left:0;top:0" width="1269" height="679">
<g fill="none" stroke="#e53935" stroke-width="1.8">
<rect x="149.2" y="104.7" width="30" height="40.5"/>
<rect x="853" y="341.8" width="235" height="30.5"/>
<rect x="863.5" y="397.5" width="204.5" height="27.2"/>
<line x1="186" y1="133.5" x2="830" y2="363.4"/>
</g>
<path d="M836.5,365.5 L823.3,367.4 L827.3,356.8 Z" fill="#e53935"/>
</svg>


</body></html>
